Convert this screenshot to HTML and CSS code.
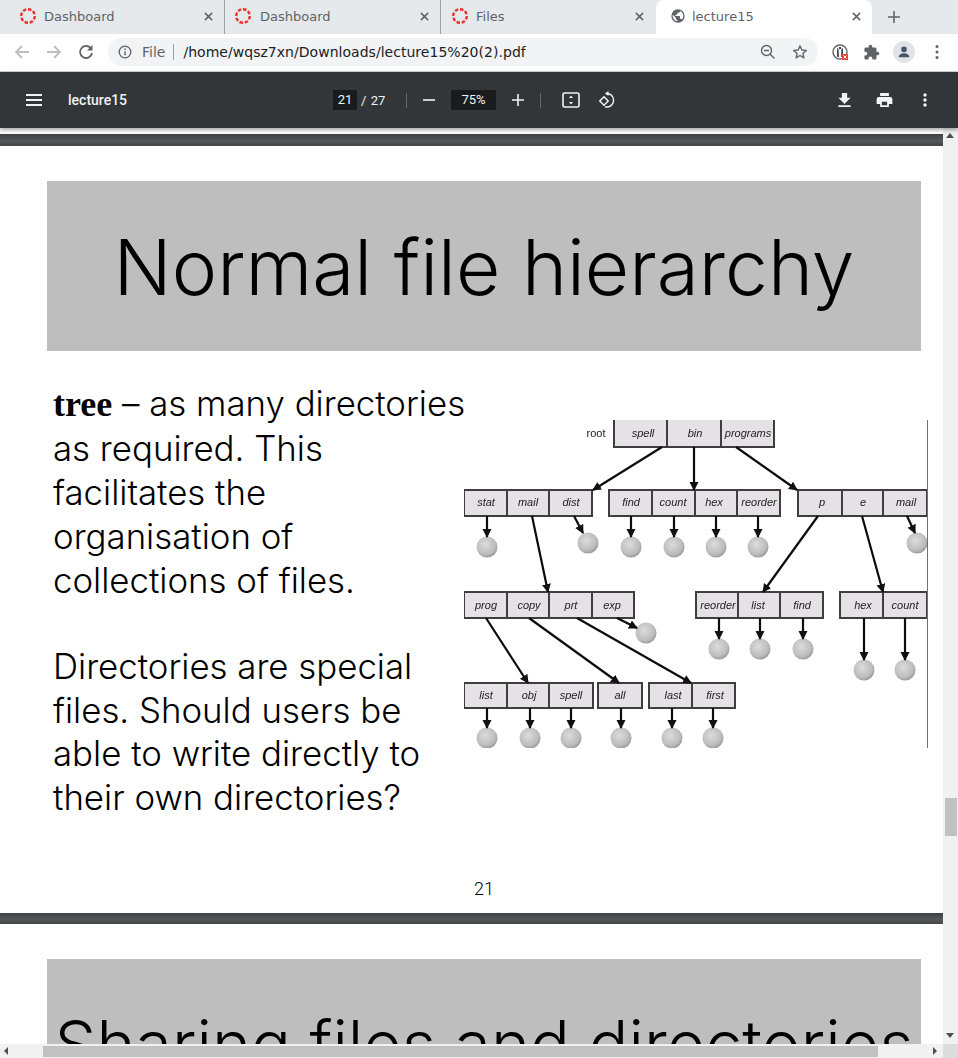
FILE: index.html
```html
<!DOCTYPE html>
<html lang="en">
<head>
  <meta charset="UTF-8" />
  <title>lecture15</title>
  <link rel="stylesheet" href="styles.css">
</head>
<body>
  <div class="tabs">
    <div class="tab tab-a">
      <svg class="favicon" viewBox="0 0 16 16"><circle cx="8" cy="8" r="6.8" fill="none" stroke="#e8352b" stroke-width="2.400" stroke-dasharray="3.600 1.700"/></svg>
      <span class="tab-title">Dashboard</span>
      <svg class="tab-close" viewBox="0 0 10 10"><path d="m1 1 8 8M9 1 1 9" stroke="#5f6368" stroke-width="1.700"/></svg>
    </div>
    <div class="tab tab-b">
      <svg class="favicon" viewBox="0 0 16 16"><circle cx="8" cy="8" r="6.8" fill="none" stroke="#e8352b" stroke-width="2.400" stroke-dasharray="3.600 1.700"/></svg>
      <span class="tab-title">Dashboard</span>
      <svg class="tab-close" viewBox="0 0 10 10"><path d="m1 1 8 8M9 1 1 9" stroke="#5f6368" stroke-width="1.700"/></svg>
    </div>
    <div class="tab tab-c">
      <svg class="favicon" viewBox="0 0 16 16"><circle cx="8" cy="8" r="6.8" fill="none" stroke="#e8352b" stroke-width="2.400" stroke-dasharray="3.600 1.700"/></svg>
      <span class="tab-title">Files</span>
      <svg class="tab-close" viewBox="0 0 10 10"><path d="m1 1 8 8M9 1 1 9" stroke="#5f6368" stroke-width="1.700"/></svg>
    </div>
    <div class="tab tab-active">
      <svg class="favicon" viewBox="0 0 24 24"><path fill="#5f6368" d="M12 2a10 10 0 1 0 0 20 10 10 0 0 0 0-20zM4 12c0-.6.1-1.200.2-1.800L9 15v1c0 1.100.9 2 2 2v2c-3.900-.5-7-3.900-7-8zm13.900 5.400c-.3-.8-1-1.400-1.900-1.400h-1v-3c0-.6-.4-1-1-1H8v-2h2c.6 0 1-.4 1-1V7h2c1.100 0 2-.9 2-2v-.4c2.900 1.200 5 4.100 5 7.400 0 2.100-.8 4-2.100 5.400z"/></svg>
      <span class="tab-title">lecture15</span>
      <svg class="tab-close" viewBox="0 0 10 10"><path d="m1 1 8 8M9 1 1 9" stroke="#5f6368" stroke-width="1.700"/></svg>
    </div>
    <svg class="new-tab" viewBox="0 0 12 12"><path d="M6 0v12M0 6h12" stroke="#5f6368" stroke-width="1.600" fill="none"/></svg>
  </div>

  <div class="toolbar">
    <svg class="nav-icon" viewBox="0 0 16 16"><path d="M15 8H2M8 2 2 8l6 6" fill="none" stroke="#bcbec1" stroke-width="1.800"/></svg>
    <svg class="nav-icon" viewBox="0 0 16 16"><path d="M1 8h13M8 2l6 6-6 6" fill="none" stroke="#bcbec1" stroke-width="1.800"/></svg>
    <svg class="nav-icon" viewBox="0 0 16 16"><path d="M13.300 5A6 6 0 1 0 14 9" fill="none" stroke="#5f6368" stroke-width="1.800"/><path d="M14.500 1v5.500H9z" fill="#5f6368"/></svg>
    <div class="omnibox">
      <svg class="info-icon" viewBox="0 0 14 14"><circle cx="7" cy="7" r="5.800" fill="none" stroke="#5f6368" stroke-width="1.300"/><path d="M7 6.200v4M7 3.600v1.400" stroke="#5f6368" stroke-width="1.400"/></svg>
      <span class="scheme">File</span>
      <span class="omni-sep"></span>
      <span class="url">/home/wqsz7xn/Downloads/lecture15%20(2).pdf</span>
      <svg class="omni-icon zoom-icon" viewBox="0 0 16 16"><circle cx="6.500" cy="6.500" r="5" fill="none" stroke="#5f6368" stroke-width="1.400"/><path d="m10 10 4.500 4.500M4 6.500h5" stroke="#5f6368" stroke-width="1.400"/></svg>
      <svg class="omni-icon star-icon" viewBox="0 0 16 16"><path d="m8 1.800 1.800 4.200 4.500.4-3.400 3 1 4.400L8 11.500l-3.900 2.300 1-4.400-3.400-3 4.500-.4z" fill="none" stroke="#5f6368" stroke-width="1.400" stroke-linejoin="round"/></svg>
    </div>
    <svg class="ext-icon" viewBox="0 0 16 16">
      <circle cx="8" cy="8" r="7" fill="#fff" stroke="#5f6368" stroke-width="1.400"/>
      <path d="M5 4c1 0 1.500 1 1.700 2.500L7 13H5zM11 4c-1 0-1.500 1-1.700 2.500L9 13h2z" fill="#4a4d50"/>
      <circle cx="8" cy="4" r="1.200" fill="#4a4d50"/>
      <rect x="10" y="10" width="6" height="6" fill="#ea4335"/>
      <path d="m11.500 11.500 3 3m0-3-3 3" stroke="#fff" stroke-width="1"/>
    </svg>
    <svg class="puzzle-icon" viewBox="0 0 24 24"><path fill="#5f6368" d="M20.500 11H19V7c0-1.100-.9-2-2-2h-4V3.500a2.500 2.500 0 0 0-5 0V5H4c-1.100 0-2 .9-2 2v3.800h1.500c1.500 0 2.700 1.200 2.700 2.700s-1.200 2.700-2.700 2.700H2V20c0 1.100.9 2 2 2h3.800v-1.500c0-1.500 1.200-2.700 2.700-2.700s2.700 1.200 2.700 2.700V22H17c1.100 0 2-.9 2-2v-4h1.500a2.500 2.500 0 0 0 0-5z"/></svg>
    <div class="avatar">
      <svg viewBox="0 0 16 16"><circle cx="8" cy="5" r="3.200" fill="#4a5568"/><path d="M2 14c0-3 3-4.500 6-4.500s6 1.500 6 4.500z" fill="#4a5568"/></svg>
    </div>
    <svg class="menu-icon" viewBox="0 0 4 16"><circle cx="2" cy="2.500" r="1.500" fill="#5f6368"/><circle cx="2" cy="8" r="1.500" fill="#5f6368"/><circle cx="2" cy="13.500" r="1.500" fill="#5f6368"/></svg>
  </div>

  <div class="pdfbar">
    <svg class="hamburger" viewBox="0 0 16 12"><path d="M0 1h16M0 6h16M0 11h16" stroke="#f1f3f4" stroke-width="1.800"/></svg>
    <span class="doc-title">lecture15</span>
    <div class="pdf-center">
      <span class="page-box">21</span>
      <span class="page-total">/ &nbsp;27</span>
      <span class="pdf-sep sep-one"></span>
      <svg class="pdf-ctl minus" viewBox="0 0 12 12"><path d="M0 6h12" stroke="#f1f3f4" stroke-width="1.600"/></svg>
      <span class="zoom-box">75%</span>
      <svg class="pdf-ctl plus" viewBox="0 0 12 12"><path d="M0 6h12M6 0v12" stroke="#f1f3f4" stroke-width="1.600"/></svg>
      <span class="pdf-sep sep-two"></span>
      <svg class="fit-icon" viewBox="0 0 18 16"><rect x="1" y="1" width="16" height="14" rx="1.500" fill="none" stroke="#f1f3f4" stroke-width="1.600"/><path d="m9 3.500 2 2.500H7zM9 12.500 7 10h4z" fill="#f1f3f4"/></svg>
      <svg class="rotate-icon" viewBox="0 0 18 18"><path d="M8 2.500a6.800 6.800 0 1 1-1 13.300" fill="none" stroke="#f1f3f4" stroke-width="1.500"/><path d="M10.500 0v5L7 2.500z" fill="#f1f3f4"/><path d="m6 5.800 4.200 4.200L6 14.200 1.800 10z" fill="none" stroke="#f1f3f4" stroke-width="1.500"/></svg>
    </div>
    <div class="pdf-right">
      <svg class="download-icon" viewBox="0 0 14 16"><path fill="#f1f3f4" d="M14 5.500h-4V0H4v5.500H0L7 12.500zM0 14v2h14v-2z"/></svg>
      <svg class="print-icon" viewBox="0 0 18 16"><path fill="#f1f3f4" d="M14 0H4v3.500h10zM15.500 4.500h-13A2.500 2.500 0 0 0 0 7v5.500h4V16h10v-3.500h4V7a2.500 2.500 0 0 0-2.500-2.500zM12 14H6v-4h6z"/></svg>
      <svg class="more-icon" viewBox="0 0 4 14"><circle cx="2" cy="2" r="1.700" fill="#f1f3f4"/><circle cx="2" cy="7" r="1.700" fill="#f1f3f4"/><circle cx="2" cy="12" r="1.700" fill="#f1f3f4"/></svg>
    </div>
  </div>

  <div class="viewer">
    <div class="viewer-main">
      <div class="pages">
        <div class="page-gap first-gap"></div>
        <section class="slide">
          <div class="slide-head"><h1>Normal file hierarchy</h1></div>
          <div class="slide-body">
            <div class="slide-text">
              <p><b>tree</b> – as many directories<br>as required. This<br>facilitates the<br>organisation of<br>collections of files.</p>
              <p>Directories are special<br>files. Should users be<br>able to write directly to<br>their own directories?</p>
            </div>
            <svg class="tree" viewBox="464 420 464 328">
              <defs>
                <radialGradient id="ball" cx="42%" cy="38%" r="68%">
                  <stop offset="0" stop-color="#dcdcdc"/>
                  <stop offset="0.7" stop-color="#bcbcbc"/>
                  <stop offset="1" stop-color="#8f8f8f"/>
                </radialGradient>
                <marker id="head" markerWidth="9" markerHeight="10" refX="8" refY="4.500" orient="auto" markerUnits="userSpaceOnUse">
                  <path d="M0 0 9 4.500 0 9z" fill="#111"/>
                </marker>
              </defs>

              <g class="boxes">
                <rect x="614" y="419" width="53" height="28"/><rect x="667" y="419" width="54" height="28"/><rect x="721" y="419" width="53" height="28"/>
                <rect x="464" y="490" width="43" height="26"/><rect x="507" y="490" width="42" height="26"/><rect x="549" y="490" width="43" height="26"/>
                <rect x="609" y="490" width="43" height="26"/><rect x="652" y="490" width="43" height="26"/><rect x="695" y="490" width="42" height="26"/><rect x="737" y="490" width="43" height="26"/>
                <rect x="798" y="490" width="44" height="26"/><rect x="842" y="490" width="41" height="26"/><rect x="883" y="490" width="44" height="26"/>
                <rect x="464" y="592" width="43" height="26"/><rect x="507" y="592" width="42" height="26"/><rect x="549" y="592" width="43" height="26"/><rect x="592" y="592" width="42" height="26"/>
                <rect x="696" y="592" width="42" height="26"/><rect x="738" y="592" width="42" height="26"/><rect x="780" y="592" width="43" height="26"/>
                <rect x="840" y="592" width="43" height="26"/><rect x="883" y="592" width="44" height="26"/>
                <rect x="464" y="683" width="43" height="25"/><rect x="507" y="683" width="42" height="25"/><rect x="549" y="683" width="44" height="25"/>
                <rect x="598" y="683" width="44" height="25"/><rect x="649" y="683" width="43" height="25"/><rect x="692" y="683" width="43" height="25"/>
              </g>

              <text class="root-label" x="596" y="437">root</text>
              <g class="labels">
                <text x="643" y="437">spell</text><text x="695" y="437">bin</text><text x="748" y="437">programs</text>
                <text x="486" y="506">stat</text><text x="528" y="506">mail</text><text x="571" y="506">dist</text>
                <text x="631" y="506">find</text><text x="673" y="506">count</text><text x="714" y="506">hex</text><text x="759" y="506">reorder</text>
                <text x="822" y="506">p</text><text x="863" y="506">e</text><text x="906" y="506">mail</text>
                <text x="486" y="609">prog</text><text x="529" y="609">copy</text><text x="571" y="609">prt</text><text x="612" y="609">exp</text>
                <text x="718" y="609">reorder</text><text x="758" y="609">list</text><text x="802" y="609">find</text>
                <text x="863" y="609">hex</text><text x="905" y="609">count</text>
                <text x="486" y="699">list</text><text x="529" y="699">obj</text><text x="571" y="699">spell</text>
                <text x="620" y="699">all</text><text x="673" y="699">last</text><text x="715" y="699">first</text>
              </g>

              <g class="balls">
                <circle cx="487" cy="547" r="10.500"/><circle cx="588" cy="543" r="10.500"/><circle cx="631" cy="547" r="10.500"/><circle cx="674" cy="547" r="10.500"/><circle cx="716" cy="547" r="10.500"/><circle cx="758" cy="547" r="10.500"/><circle cx="917" cy="543" r="10.500"/>
                <circle cx="646" cy="633" r="10.500"/><circle cx="719" cy="649" r="10.500"/><circle cx="760" cy="649" r="10.500"/><circle cx="803" cy="649" r="10.500"/><circle cx="864" cy="670" r="10.500"/><circle cx="905" cy="670" r="10.500"/>
                <circle cx="487" cy="738" r="10.500"/><circle cx="530" cy="738" r="10.500"/><circle cx="571" cy="738" r="10.500"/><circle cx="621" cy="738" r="10.500"/><circle cx="672" cy="738" r="10.500"/><circle cx="713" cy="738" r="10.500"/>
              </g>

              <g class="arrows">
                <line x1="662" y1="447" x2="593" y2="490"/><line x1="694" y1="447" x2="694" y2="490"/><line x1="736" y1="447" x2="797" y2="490"/>
                <line x1="487" y1="516" x2="487" y2="537"/><line x1="574" y1="516" x2="583" y2="533"/><line x1="532" y1="516" x2="548" y2="592"/>
                <line x1="631" y1="516" x2="631" y2="537"/><line x1="674" y1="516" x2="674" y2="537"/><line x1="716" y1="516" x2="716" y2="537"/><line x1="758" y1="516" x2="758" y2="537"/>
                <line x1="818" y1="516" x2="763" y2="592"/><line x1="862" y1="516" x2="883" y2="592"/><line x1="907" y1="516" x2="915" y2="533"/>
                <line x1="486" y1="618" x2="528" y2="683"/><line x1="529" y1="618" x2="619" y2="683"/><line x1="577" y1="618" x2="691" y2="683"/><line x1="617" y1="618" x2="637" y2="628"/>
                <line x1="719" y1="618" x2="719" y2="639"/><line x1="760" y1="618" x2="760" y2="639"/><line x1="803" y1="618" x2="803" y2="639"/>
                <line x1="864" y1="618" x2="864" y2="660"/><line x1="905" y1="618" x2="905" y2="660"/>
                <line x1="487" y1="708" x2="487" y2="728"/><line x1="530" y1="708" x2="530" y2="728"/><line x1="571" y1="708" x2="571" y2="728"/><line x1="621" y1="708" x2="621" y2="728"/><line x1="672" y1="708" x2="672" y2="728"/><line x1="713" y1="708" x2="713" y2="728"/>
              </g>

              <line class="edge" x1="927.500" y1="420" x2="927.500" y2="748"/>
            </svg>
          </div>
          <div class="page-num">21</div>
        </section>
        <div class="page-gap"></div>
        <section class="slide slide-cut">
          <div class="slide-head"><h1>Sharing files and directories</h1></div>
        </section>
      </div>
      <div class="vscroll">
        <span class="arrow-up"></span>
        <span class="vthumb"></span>
        <span class="arrow-down"></span>
      </div>
    </div>
    <div class="hscroll">
      <span class="arrow-left"></span>
      <span class="hthumb"></span>
      <span class="arrow-right"></span>
      <span class="corner"></span>
    </div>
  </div>
</body>
</html>
```

FILE: styles.css
```css
* {
  box-sizing: border-box;
}

html,
body {
  margin: 0;
  height: 1058px;
  overflow: hidden;
  background: #fff;
}

body {
  display: flex;
  flex-direction: column;
  font-family: "DejaVu Sans", sans-serif;
}

/* tab strip */
.tabs {
  display: flex;
  align-items: center;
  height: 34px;
  background: #e6e9ec;
}

.tab {
  display: flex;
  align-items: center;
  height: 34px;
  padding-left: 20px;
  padding-right: 10px;
  padding-bottom: 2px;
  font-size: 13px;
  color: #5f6368;
}

.tab-a {
  width: 225px;
  border-right: 1px solid #9da0a4;
}

.tab-b {
  width: 216px;
  padding-left: 10px;
  border-right: 1px solid #9da0a4;
}

.tab-c {
  width: 215px;
  padding-left: 11px;
}

.tab-active {
  width: 216px;
  padding-left: 14px;
  background: #fff;
  border-radius: 8px 8px 0 0;
}

.favicon {
  width: 16px;
  height: 16px;
  margin-right: 8px;
  flex: none;
}

.tab-active .favicon {
  margin-right: 6px;
}

.tab-title {
  flex: 1;
}

.tab-close {
  width: 9px;
  height: 9px;
  margin-right: 1px;
}

.tab-b .tab-title {
  padding-left: 1px;
}

.tab-c .tab-close {
  margin-right: 2px;
}

.new-tab {
  width: 12px;
  height: 12px;
  margin-left: 16px;
}

/* address bar row */
.toolbar {
  display: flex;
  align-items: center;
  height: 38px;
  padding-left: 14px;
  padding-bottom: 1px;
  background: #fff;
  border-bottom: 1px solid #d0d2d4;
}

.nav-icon {
  width: 16px;
  height: 16px;
  margin-right: 16px;
}

.omnibox {
  display: flex;
  align-items: center;
  width: 710px;
  height: 28px;
  margin-left: -2px;
  padding: 0 10px;
  background: #f1f3f4;
  border-radius: 14px;
}

.info-icon {
  width: 14px;
  height: 14px;
  margin-right: 10px;
}

.scheme {
  font-size: 14px;
  color: #5f6368;
  padding-bottom: 1px;
}

.omni-sep {
  width: 1px;
  height: 16px;
  margin: 0 9px 0 8px;
  background: #9da0a4;
}

.url {
  flex: 1;
  font-size: 14px;
  letter-spacing: 0.03px;
  color: #202124;
  padding-bottom: 1px;
}

.omni-icon {
  width: 16px;
  height: 16px;
}

.zoom-icon {
  margin-right: 16px;
}

.star-icon {
  margin-right: 0;
}

.ext-icon {
  width: 16px;
  height: 16px;
  margin-left: 14px;
}

.puzzle-icon {
  width: 17px;
  height: 17px;
  margin-left: 15px;
}

.avatar {
  display: flex;
  align-items: center;
  justify-content: center;
  width: 22px;
  height: 22px;
  margin-left: 13px;
  border-radius: 50%;
  background: #e0e3e8;
}

.avatar svg {
  width: 14px;
  height: 14px;
}

.menu-icon {
  width: 4px;
  height: 16px;
  margin-left: 20px;
}

/* pdf viewer toolbar */
.pdfbar {
  position: relative;
  z-index: 2;
  display: flex;
  align-items: center;
  height: 56px;
  padding-left: 26px;
  background: #323639;
  color: #f1f3f4;
  font-family: Roboto, sans-serif;
  box-shadow: 0 2px 4px rgba(0, 0, 0, 0.35);
}

.hamburger {
  width: 16px;
  height: 12px;
}

.doc-title {
  width: 265px;
  margin-left: 26px;
  font-size: 14px;
  font-weight: 500;
}

.pdf-center {
  display: flex;
  align-items: center;
  font-size: 13px;
}

.page-box {
  width: 24px;
  height: 20px;
  line-height: 20px;
  text-align: center;
  background: #191b1c;
}

.page-total {
  width: 49px;
  padding-left: 4px;
  word-spacing: -1px;
}

.pdf-sep {
  width: 1px;
  height: 15px;
  background: #63666a;
}

.pdf-ctl {
  width: 12px;
  height: 12px;
}

.minus {
  margin-left: 16px;
}

.zoom-box {
  width: 45px;
  height: 20px;
  margin-left: 16px;
  line-height: 20px;
  text-align: center;
  background: #191b1c;
}

.plus {
  margin-left: 16px;
}

.sep-two {
  margin-left: 16px;
}

.fit-icon {
  width: 18px;
  height: 16px;
  margin-left: 21px;
}

.rotate-icon {
  width: 18px;
  height: 18px;
  margin-left: 18px;
}

.pdf-right {
  display: flex;
  align-items: center;
  margin-left: 222px;
}

.download-icon {
  width: 13px;
  height: 14px;
}

.print-icon {
  width: 17px;
  height: 14px;
  margin-left: 25px;
}

.more-icon {
  width: 4px;
  height: 14px;
  margin-left: 30px;
}

/* document area */
.viewer {
  display: flex;
  flex-direction: column;
  flex: 1;
  min-height: 0;
}

.viewer-main {
  display: flex;
  height: 916px;
}

.pages {
  flex: 1;
  overflow: hidden;
  background: #fff;
}

.page-gap {
  height: 11px;
  background: linear-gradient(#3e4245, #53575a 60%, #414548);
}

.first-gap {
  margin-top: 6px;
  height: 12px;
}

.slide {
  height: 767px;
  padding: 35px 22px 0 47px;
  background: #fff;
}

.slide-head {
  height: 170px;
  background: #bebebe;
  text-align: center;
}

.slide-head h1 {
  margin: 0;
  padding-top: 38px;
  font-family: Inter, sans-serif;
  font-size: 76.600px;
  line-height: 96px;
  font-weight: 300;
  font-variant-ligatures: none;
  color: #000;
  white-space: nowrap;
}

.slide-cut .slide-head h1 {
  padding-top: 37px;
  font-size: 66.300px;
}

.slide-body {
  display: flex;
  height: 508px;
  margin-right: -7px;
}

.slide-text {
  width: 417px;
  padding: 30px 0 0 6px;
  font-family: Inter, sans-serif;
  font-weight: 300;
  font-size: 34.800px;
  font-variant-ligatures: none;
  line-height: 44px;
  color: #000;
  white-space: nowrap;
}

.slide-text p {
  margin: 0 0 43px;
}

.slide-text p + p {
  line-height: 43.500px;
}

.slide-text b {
  font-family: "Liberation Serif", serif;
  font-weight: 700;
  font-size: 36px;
}

.tree {
  width: 464px;
  height: 328px;
  margin-top: 69px;
  flex: none;
  filter: blur(0.5px);
}

.boxes rect {
  fill: #e5e1e6;
  stroke: #3e3e3e;
  stroke-width: 2;
}

.labels text {
  font-family: "Liberation Sans", sans-serif;
  font-style: italic;
  font-size: 11px;
  text-anchor: middle;
  fill: #222;
}

.root-label {
  font-family: "Liberation Sans", sans-serif;
  font-size: 11px;
  text-anchor: middle;
  fill: #222;
}

.balls circle {
  fill: url(#ball);
  stroke: none;
}

.arrows line {
  stroke: #0c0c0c;
  stroke-width: 2.200;
  marker-end: url(#head);
}

.edge {
  stroke: #707070;
  stroke-width: 1;
}

.page-num {
  margin-top: 19px;
  text-align: center;
  font-family: Roboto, sans-serif;
  font-weight: 300;
  font-size: 18px;
  line-height: 22px;
  color: #000;
}

/* scrollbars */
.vscroll {
  position: relative;
  width: 15px;
  background: #f1f1f1;
}

.vthumb {
  position: absolute;
  left: 2px;
  top: 670px;
  width: 12px;
  height: 38px;
  background: #c1c1c1;
}

.arrow-up,
.arrow-down {
  position: absolute;
  left: 3px;
  width: 0;
  height: 0;
  border-left: 4px solid transparent;
  border-right: 4px solid transparent;
}

.arrow-up {
  top: 5px;
  border-bottom: 5px solid #505050;
}

.arrow-down {
  bottom: 6px;
  border-top: 5px solid #505050;
}

.hscroll {
  position: relative;
  height: 14px;
  background: #f1f1f1;
}

.hthumb {
  position: absolute;
  left: 43px;
  top: 2px;
  width: 835px;
  height: 11px;
  background: #c1c1c1;
}

.arrow-left,
.arrow-right {
  position: absolute;
  top: 3px;
  width: 0;
  height: 0;
  border-top: 4px solid transparent;
  border-bottom: 4px solid transparent;
}

.arrow-left {
  left: 4px;
  border-right: 4px solid #505050;
}

.arrow-right {
  left: 933px;
  border-left: 4px solid #505050;
}

.corner {
  position: absolute;
  right: 0;
  top: 0;
  width: 15px;
  height: 14px;
  background: #dcdcdc;
}
```
